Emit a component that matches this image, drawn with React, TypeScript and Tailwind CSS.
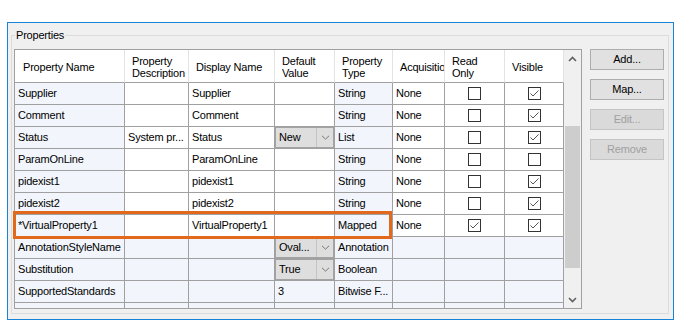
import React from 'react';

type Row = {
  name: string;
  desc?: string;
  disp?: string;
  def?: string;
  combo?: string;
  type: string;
  acq?: string;
  ro?: boolean;
  vis?: boolean;
  locked?: boolean;
};

const rows: Row[] = [
  { name: 'Supplier', disp: 'Supplier', type: 'String', acq: 'None', ro: false, vis: true },
  { name: 'Comment', disp: 'Comment', type: 'String', acq: 'None', ro: false, vis: true },
  { name: 'Status', desc: 'System pr...', disp: 'Status', combo: 'New', type: 'List', acq: 'None', ro: false, vis: true },
  { name: 'ParamOnLine', disp: 'ParamOnLine', type: 'String', acq: 'None', ro: false, vis: false },
  { name: 'pidexist1', disp: 'pidexist1', type: 'String', acq: 'None', ro: false, vis: true },
  { name: 'pidexist2', disp: 'pidexist2', type: 'String', acq: 'None', ro: false, vis: true },
  { name: '*VirtualProperty1', disp: 'VirtualProperty1', type: 'Mapped', acq: 'None', ro: true, vis: true },
  { name: 'AnnotationStyleName', combo: 'Oval...', type: 'Annotation', locked: true },
  { name: 'Substitution', combo: 'True', type: 'Boolean', locked: true },
  { name: 'SupportedStandards', def: '3', type: 'Bitwise F...', locked: true },
];

const cols = 'grid grid-cols-[110px_64px_86px_60px_58px_52px_60px_59px]';
const blue = 'bg-[#f2f6fc]';

const Check = ({ checked }: { checked: boolean }) => (
  <div className="w-[13px] h-[13px] border border-[#333333] bg-white flex items-center justify-center">
    {checked && (
      <svg width="11" height="11" viewBox="0 0 11 11">
        <path d="M1.5 5.5 L4 8 L9.5 2.5" stroke="#555555" strokeWidth="1" fill="none" />
      </svg>
    )}
  </div>
);

const Combo = ({ value }: { value: string }) => (
  <div className="flex w-full h-full border border-[#a3a3a3] bg-[#dedede]">
    <div className="flex-1 flex items-center pl-[3px]">{value}</div>
    <div className="w-[17px] border-l border-[#c4c4c4] flex items-center justify-center">
      <svg width="9" height="5" viewBox="0 0 9 5">
        <path d="M1 0.8 L4.5 4.2 L8 0.8" stroke="#777777" strokeWidth="1" fill="none" />
      </svg>
    </div>
  </div>
);

const Cell = ({ children, bg = 'bg-white', center = false }: { children?: React.ReactNode; bg?: string; center?: boolean }) => (
  <div
    className={`h-[22px] border-r border-b border-[#a0a0a0] flex items-center overflow-hidden whitespace-nowrap ${
      center ? 'justify-center' : 'pl-[3px]'
    } ${bg}`}
  >
    {children}
  </div>
);

const Head = ({ children, first = false }: { children: React.ReactNode; first?: boolean }) => (
  <div
    className={`h-[33px] border-r border-b border-r-[#e3e3e3] border-b-[#a0a0a0] bg-white flex items-center pt-[2px] overflow-hidden whitespace-nowrap leading-[12px] ${
      first ? 'pl-[8px]' : 'pl-[7px]'
    }`}
  >
    {children}
  </div>
);

const Btn = ({ label, disabled = false }: { label: string; disabled?: boolean }) => (
  <div
    className={`w-[74px] h-[21px] border flex items-center justify-center ${
      disabled ? 'border-[#c4c4c4] bg-[#dadada] text-[#a0a0a0]' : 'border-[#adadad] bg-[#e1e1e1] text-black'
    }`}
  >
    {label}
  </div>
);

export default function App() {
  return (
    <div
      className="w-[680px] h-[330px] bg-white pt-[22px] pl-[7px] text-[11px] tracking-[-0.2px] text-black"
      style={{ fontFamily: '"Liberation Sans", Arial, sans-serif' }}
    >
      <div className="w-[667px] h-[298px] border border-[#1883d7] bg-[#f0f0f0] pt-[6px] pl-[3px]">
        <fieldset className="w-[658px] h-[285px] border border-[#dcdcdc] px-[2px] pt-[7px] pb-0 m-0">
          <legend className="ml-[1px] px-[1px] leading-[13px]">Properties</legend>
          <div className="flex gap-[8px]">
            {/* grid */}
            <div className="relative flex w-[568px] h-[260px] border border-[#a0a0a0] bg-white">
              <div className="w-[549px] h-[258px] overflow-hidden">
                <div className={cols}>
                  <Head first>Property Name</Head>
                  <Head>
                    <div>Property<br />Description</div>
                  </Head>
                  <Head>Display Name</Head>
                  <Head>
                    <div>Default<br />Value</div>
                  </Head>
                  <Head>
                    <div>Property<br />Type</div>
                  </Head>
                  <Head>Acquisition</Head>
                  <Head>
                    <div>Read<br />Only</div>
                  </Head>
                  <Head>Visible</Head>
                </div>
                {rows.map((r, i) => {
                  const bg = r.locked ? blue : 'bg-white';
                  return (
                    <div key={i} className={cols}>
                      <Cell bg={blue}>{r.name}</Cell>
                      <Cell bg={bg}>{r.desc}</Cell>
                      <Cell bg={bg}>{r.disp}</Cell>
                      {r.combo ? (
                        <div className="h-[22px] border-r border-b border-[#a0a0a0]">
                          <Combo value={r.combo} />
                        </div>
                      ) : (
                        <Cell bg={bg}>{r.def}</Cell>
                      )}
                      <Cell bg={blue}>{r.type}</Cell>
                      <Cell bg={bg}>{r.acq}</Cell>
                      <Cell bg={bg} center>
                        {!r.locked && <Check checked={!!r.ro} />}
                      </Cell>
                      <Cell bg={bg} center>
                        {!r.locked && <Check checked={!!r.vis} />}
                      </Cell>
                    </div>
                  );
                })}
                <div className={cols}>
                  {Array.from({ length: 8 }).map((_, i) => (
                    <Cell key={i} bg={blue} />
                  ))}
                </div>
              </div>
              {/* scrollbar */}
              <div className="w-[17px] h-[258px] bg-[#f0f0f0] flex flex-col items-center">
                <div className="h-[17px] flex items-center justify-center">
                  <svg width="9" height="6" viewBox="0 0 9 6">
                    <path d="M1 5 L4.5 1.5 L8 5" stroke="#606060" strokeWidth="1.6" fill="none" />
                  </svg>
                </div>
                <div className="h-[59px]" />
                <div className="w-[15px] h-[142px] bg-[#cdcdcd]" />
                <div className="flex-1" />
                <div className="h-[17px] flex items-center justify-center">
                  <svg width="9" height="6" viewBox="0 0 9 6">
                    <path d="M1 1 L4.5 4.5 L8 1" stroke="#606060" strokeWidth="1.6" fill="none" />
                  </svg>
                </div>
              </div>
              {/* highlight */}
              <div className="absolute left-[-2px] top-[161px] w-[379px] h-[28px] border-[3px] border-[#e2691c] pointer-events-none" />
            </div>
            {/* buttons */}
            <div className="flex flex-col gap-[9px]">
              <Btn label="Add..." />
              <Btn label="Map..." />
              <Btn label="Edit..." disabled />
              <Btn label="Remove" disabled />
            </div>
          </div>
        </fieldset>
      </div>
    </div>
  );
}
